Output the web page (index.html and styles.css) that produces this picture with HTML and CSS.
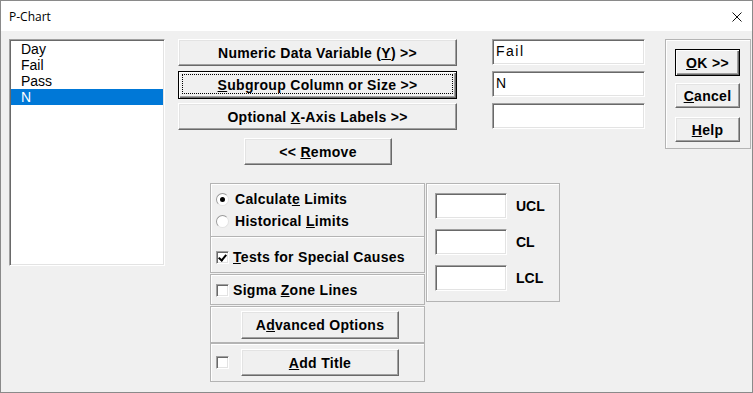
FILE: index.html
```html
<!DOCTYPE html>
<html lang="en">
<head>
    <meta charset="UTF-8">
    <title>P-Chart</title>
    <link rel="stylesheet" href="styles.css">
</head>
<body>

    <div class="window">
        <div class="titlebar">
            <span class="title">P-Chart</span>
            <svg class="close" width="10" height="10" viewBox="0 0 10 10">
                <path d="M0.5 0.5 L9.5 9.5 M9.5 0.5 L0.5 9.5" stroke="#111" stroke-width="1" fill="none"/>
            </svg>
        </div>

        <div class="client">
            <div class="listbox">
                <div class="item">Day</div>
                <div class="item">Fail</div>
                <div class="item">Pass</div>
                <div class="item selected">N</div>
            </div>

            <div class="middle">
                <div class="top">
                    <div class="var-buttons">
                        <button class="btn wide b1"><span>Numeric Data Variable (<u>Y</u>) &gt;&gt;</span></button>
                        <button class="btn wide default b2"><span><u>S</u>ubgroup Column or Size &gt;&gt;</span></button>
                        <button class="btn wide b3"><span>Optional <u>X</u>-Axis Labels &gt;&gt;</span></button>
                        <button class="btn remove"><span>&lt;&lt; <u>R</u>emove</span></button>
                    </div>
                    <div class="var-fields">
                        <div class="field">Fail</div>
                        <div class="field">N</div>
                        <div class="field"></div>
                    </div>
                </div>

                <div class="options">
                    <div class="opt-col">
                        <div class="group g-limits">
                            <div class="choice"><span class="radio checked"></span><span>Calculat<u>e</u> Limits</span></div>
                            <div class="choice"><span class="radio"></span><span>Historical <u>L</u>imits</span></div>
                        </div>
                        <div class="group g-tests">
                            <div class="choice"><span class="check checked"></span><span><u>T</u>ests for Special Causes</span></div>
                        </div>
                        <div class="group g-zones">
                            <div class="choice"><span class="check"></span><span>Sigma <u>Z</u>one Lines</span></div>
                        </div>
                        <div class="group g-advanced">
                            <button class="btn mid"><span>A<u>d</u>vanced Options</span></button>
                        </div>
                        <div class="group g-title">
                            <span class="check"></span>
                            <button class="btn mid"><span><u>A</u>dd Title</span></button>
                        </div>
                    </div>

                    <div class="group g-values">
                        <div class="val-row"><div class="field small"></div><span class="val-label">UCL</span></div>
                        <div class="val-row"><div class="field small"></div><span class="val-label">CL</span></div>
                        <div class="val-row"><div class="field small"></div><span class="val-label">LCL</span></div>
                    </div>
                </div>
            </div>

            <div class="group g-actions">
                <button class="btn act default ok"><span><u>O</u>K &gt;&gt;</span></button>
                <button class="btn act cancel"><span><u>C</u>ancel</span></button>
                <button class="btn act help"><span><u>H</u>elp</span></button>
            </div>
        </div>
    </div>

</body>
</html>
```

FILE: styles.css
```css
* {
    box-sizing: border-box;
}

body {
    margin: 0;
    padding: 0;
    background-color: #f0f0f0;
    font-family: "Liberation Sans", Arial, sans-serif;
    color: #000;
}

.window {
    width: 753px;
    height: 393px;
    border: 1px solid #8a8a8a;
    background-color: #f0f0f0;
    overflow: hidden;
}

.titlebar {
    height: 30px;
    background-color: #fff;
    display: flex;
    align-items: center;
    justify-content: space-between;
    padding: 1px 10px 0 8px;
}

.title {
    font-family: "Open Sans", sans-serif;
    font-size: 12px;
    color: #000;
}

.client {
    display: flex;
    align-items: flex-start;
    padding: 8px 0 0 8px;
}

/* list of columns */
.listbox {
    width: 156px;
    height: 227px;
    background-color: #fff;
    border-top: 1px solid #a0a0a0;
    border-left: 1px solid #a0a0a0;
    border-right: 1px solid #fff;
    border-bottom: 1px solid #fff;
    box-shadow: inset 1px 1px #696969, inset -1px -1px #e3e3e3;
    padding: 1px;
    margin-right: 13px;
}

.item {
    height: 16px;
    line-height: 16px;
    font-size: 14px;
    padding-left: 10px;
}

.item.selected {
    background-color: #0078d7;
    color: #fff;
}

.middle {
    width: 467px;
    display: flex;
    flex-direction: column;
}

.top {
    display: flex;
    align-items: flex-start;
}

.var-buttons {
    width: 279px;
    display: flex;
    flex-direction: column;
}

/* 3d push buttons */
.btn {
    position: relative;
    display: flex;
    align-items: center;
    justify-content: center;
    margin: 0;
    padding: 0;
    font-family: "Liberation Sans", Arial, sans-serif;
    font-weight: bold;
    font-size: 14px;
    letter-spacing: 0.3px;
    white-space: pre;
    color: #000;
    background-color: #f0f0f0;
    border-top: 1px solid #fff;
    border-left: 1px solid #fff;
    border-right: 1px solid #696969;
    border-bottom: 1px solid #696969;
    box-shadow: inset -1px -1px #a0a0a0, inset 1px 1px #e3e3e3;
    cursor: pointer;
}

.btn.default {
    border: 1px solid #000;
    box-shadow: inset 1px 1px #fff, inset -1px -1px #696969, inset -2px -2px #a0a0a0;
}

.btn.b2::after {
    content: "";
    position: absolute;
    top: 2px;
    left: 3px;
    right: 3px;
    bottom: 4px;
    border: 1px dotted #000;
}

.btn.wide {
    width: 279px;
    height: 27px;
}

.btn.b1 {
    margin-bottom: 5px;
}

.btn.b2 {
    height: 28px;
    margin-bottom: 4px;
}

.btn.b3 {
    margin-bottom: 8px;
}

.btn.remove {
    width: 148px;
    height: 27px;
    margin-left: 66px;
}

.var-fields {
    width: 154px;
    margin-left: 35px;
    display: flex;
    flex-direction: column;
    gap: 6px;
}

.field {
    height: 26px;
    background-color: #fff;
    border-top: 1px solid #a0a0a0;
    border-left: 1px solid #a0a0a0;
    border-right: 1px solid #fff;
    border-bottom: 1px solid #fff;
    box-shadow: inset 1px 1px #696969, inset -1px -1px #e3e3e3;
    font-size: 14px;
    letter-spacing: 1.5px;
    line-height: 22px;
    padding-left: 3px;
}

.field.small {
    width: 72px;
}

/* option frames */
.options {
    display: flex;
    align-items: flex-start;
    margin-top: 18px;
    margin-left: 32px;
}

.opt-col {
    width: 215px;
    display: flex;
    flex-direction: column;
}

.group {
    border: 1px solid #b4b4b4;
    box-shadow: inset 1px 1px #fff;
}

.choice {
    display: flex;
    align-items: center;
    height: 22px;
    font-size: 14px;
    font-weight: bold;
    letter-spacing: 0.3px;
    white-space: pre;
}

.g-limits {
    height: 54px;
    padding: 4px 0 0 5px;
}

.g-tests {
    height: 37px;
    margin-top: -1px;
    padding: 5px 0 0 5px;
    display: flex;
    align-items: center;
}

.g-zones {
    height: 31px;
    margin-top: 1px;
    padding: 1px 0 0 5px;
    display: flex;
    align-items: center;
}

.g-advanced {
    height: 37px;
    margin-top: 1px;
    padding: 4px 0 0 30px;
}

.g-title {
    height: 39px;
    padding: 0 0 0 5px;
    display: flex;
    align-items: center;
}

.btn.mid {
    width: 158px;
    height: 28px;
}

.g-title .btn.mid {
    height: 27px;
}

.radio {
    width: 13px;
    height: 13px;
    border-radius: 50%;
    background-color: #fff;
    border: 1px solid;
    border-color: #9a9a9a #e3e3e3 #e3e3e3 #9a9a9a;
    margin-right: 6px;
    position: relative;
    flex-shrink: 0;
}

.radio.checked::after {
    content: "";
    position: absolute;
    left: 3px;
    top: 3px;
    width: 5px;
    height: 5px;
    border-radius: 50%;
    background-color: #000;
}

.check {
    width: 13px;
    height: 13px;
    background-color: #fff;
    border-top: 1px solid #a0a0a0;
    border-left: 1px solid #a0a0a0;
    border-right: 1px solid #fff;
    border-bottom: 1px solid #fff;
    box-shadow: inset 1px 1px #696969, inset -1px -1px #e3e3e3;
    margin-right: 4px;
    position: relative;
    flex-shrink: 0;
}

.check.checked::after {
    content: "";
    position: absolute;
    left: 3px;
    top: 1px;
    width: 3px;
    height: 6px;
    border-right: 2px solid #000;
    border-bottom: 2px solid #000;
    transform: rotate(40deg);
}

.g-title .check {
    margin-right: 12px;
}

.g-values {
    width: 134px;
    height: 119px;
    margin-left: 1px;
    padding: 9px 0 0 8px;
    display: flex;
    flex-direction: column;
    gap: 10px;
}

.val-row {
    display: flex;
    align-items: center;
}

.val-label {
    margin-left: 9px;
    font-size: 14px;
    font-weight: bold;
}

.g-actions {
    width: 86px;
    height: 110px;
    margin-left: 20px;
    padding: 9px 0 0 9px;
    display: flex;
    flex-direction: column;
}

.btn.act {
    width: 65px;
    height: 25px;
}

.btn.ok {
    height: 27px;
    margin-bottom: 7px;
}

.btn.cancel {
    margin-bottom: 9px;
}
```
